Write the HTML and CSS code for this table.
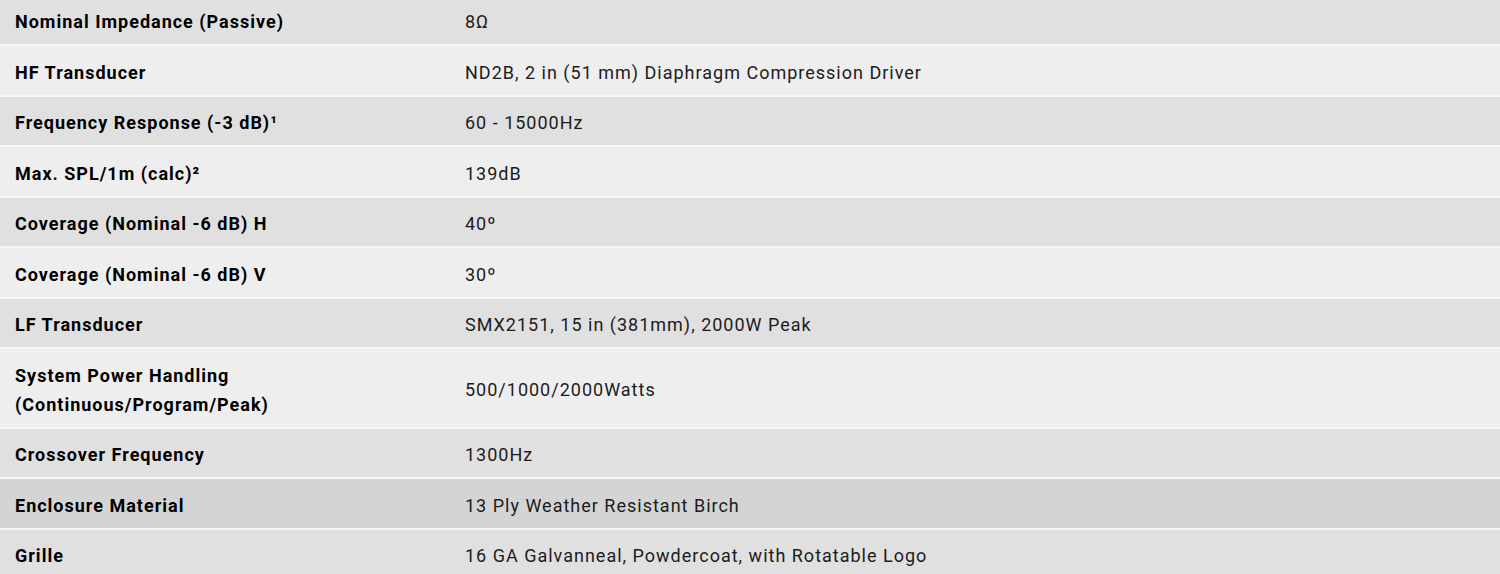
FILE: index.html
```html
<!DOCTYPE html>
<html lang="en">
<head>
<meta charset="utf-8">
<title>Specifications</title>
<link rel="stylesheet" href="styles.css">
</head>
<body>
<table class="specs">
  <tbody>
    <tr><th>Nominal Impedance (Passive)</th><td>8Ω</td></tr>
    <tr><th>HF Transducer</th><td>ND2B, 2 in (51 mm) Diaphragm Compression Driver</td></tr>
    <tr><th>Frequency Response (-3 dB)¹</th><td>60 - 15000Hz</td></tr>
    <tr><th>Max. SPL/1m (calc)²</th><td>139dB</td></tr>
    <tr><th>Coverage (Nominal -6 dB) H</th><td>40º</td></tr>
    <tr><th>Coverage (Nominal -6 dB) V</th><td>30º</td></tr>
    <tr><th>LF Transducer</th><td>SMX2151, 15 in (381mm), 2000W Peak</td></tr>
    <tr><th>System Power Handling<br>(Continuous/Program/Peak)</th><td>500/1000/2000Watts</td></tr>
    <tr><th>Crossover Frequency</th><td>1300Hz</td></tr>
    <tr class="is-hover"><th>Enclosure Material</th><td>13 Ply Weather Resistant Birch</td></tr>
    <tr><th>Grille</th><td>16 GA Galvanneal, Powdercoat, with Rotatable Logo</td></tr>
  </tbody>
</table>
</body>
</html>
```
FILE: styles.css
```css
html, body {
  margin: 0;
  padding: 0;
  background: #ffffff;
  overflow: hidden;
}

.specs {
  width: 1500px;
  margin-top: -4.5px;
  border-collapse: collapse;
  font-family: Roboto, "Liberation Sans", sans-serif;
  font-size: 18px;
  letter-spacing: 1px;
  line-height: 29px;
  color: #1c1c1c;
}

.specs th,
.specs td {
  padding: 11.5px 15px 8px 15px;
  text-align: left;
  vertical-align: middle;
  border-bottom: 2px solid #f6f6f6;
}

.specs th {
  width: 450px;
  box-sizing: border-box;
  font-weight: 700;
  color: #000000;
}

.specs td {
  font-weight: 400;
}

.specs tr:nth-child(odd) {
  background: #e0e0e0;
}

.specs tr:nth-child(even) {
  background: #eeeeee;
}

.specs tr.is-hover {
  background: #d4d4d4;
}
```
